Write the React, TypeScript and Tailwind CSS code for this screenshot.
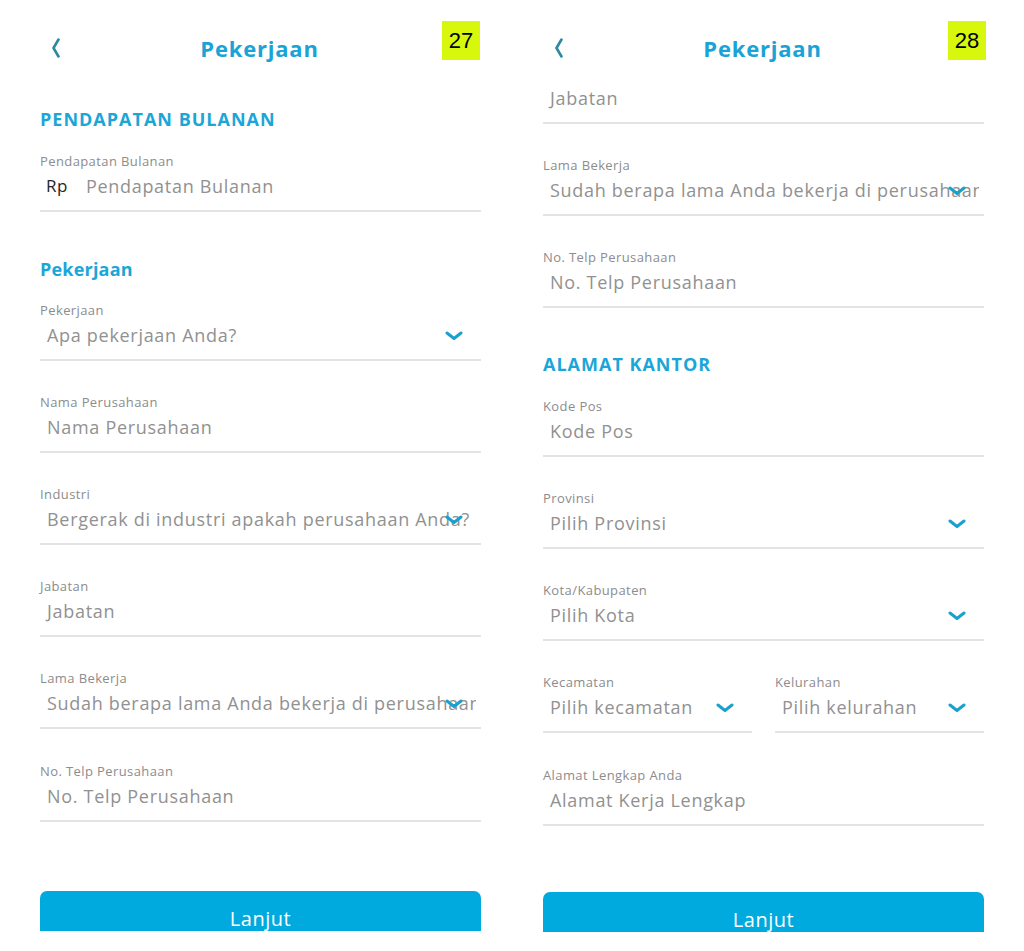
import React from "react";

const FONT = { fontFamily: '"Open Sans", "DejaVu Sans", sans-serif' };

function Chevron({ className = "" }: { className?: string }) {
  return (
    <svg width="18" height="10" viewBox="0 0 18 10" className={className}>
      <polyline points="2,2 9,7.5 16,2" fill="none" stroke="#1aa0cf" strokeWidth="3" strokeLinecap="round" strokeLinejoin="round" />
    </svg>
  );
}

function Header({ badge, badgeLeft }: { badge: string; badgeLeft: string }) {
  return (
    <div className="relative h-[84px] w-[503px] pt-[34px] bg-white">
      <div className="relative flex items-center justify-center h-[28px]">
        <svg width="10" height="20" viewBox="0 0 10 20" className="absolute left-[51px] top-[4px]">
          <polyline points="7.5,1.5 2.5,10 7.5,18.5" fill="none" stroke="#2b8b9d" strokeWidth="2.6" strokeLinecap="round" strokeLinejoin="round" />
        </svg>
        <span className="text-[22px] leading-[28px] font-bold tracking-[0.8px] text-[#1aa3d6] pl-[16px]">Pekerjaan</span>
      </div>
      <div
        className={`absolute top-[21px] ${badgeLeft} w-[38px] h-[39px] bg-[#d7f80c] flex items-center justify-center text-[22px] text-black`}
        style={{ fontFamily: '"Liberation Sans", Arial, sans-serif' }}
      >
        {badge}
      </div>
    </div>
  );
}

function Field({
  label,
  value,
  select = false,
  prefix,
  className = "",
  noLabel = false,
}: {
  label?: string;
  value: string;
  select?: boolean;
  prefix?: string;
  className?: string;
  noLabel?: boolean;
}) {
  return (
    <div className={className}>
      {!noLabel && (
        <div className="h-[16px] leading-[16px] text-[13px] tracking-[0.4px] text-[#8c8c8c] mb-[3px] whitespace-nowrap">{label}</div>
      )}
      <div className="relative h-[28px] flex items-center pr-[5px]">
        <div className="flex items-center overflow-hidden whitespace-nowrap pl-[7px] min-w-0 flex-1">
          {prefix && <span className="text-[17px] tracking-[0.5px] text-[#262626] mr-[18px] -ml-[1px]">{prefix}</span>}
          <span className="text-[18px] leading-[28px] tracking-[0.7px] text-[#919191]">{value}</span>
        </div>
        {select && <Chevron className="absolute right-[18px] top-[10px]" />}
      </div>
      <div className="mt-[10px] h-[2px] bg-[#e3e3e3]" />
    </div>
  );
}

function SectionTitle({ children, className = "" }: { children: React.ReactNode; className?: string }) {
  return <div className={`h-[24px] leading-[24px] text-[18px] font-bold text-[#1ba6d8] ${className}`}>{children}</div>;
}

function Button() {
  return (
    <div className="h-[40px] overflow-hidden rounded-t-[7px] bg-[#00aadf] flex justify-center">
      <span className="pt-[15px] text-[20px] leading-[26px] tracking-[0.5px] text-white">Lanjut</span>
    </div>
  );
}

export default function App() {
  return (
    <div className="w-[1024px] h-[951px] bg-white flex overflow-hidden" style={FONT}>
      {/* Left screen */}
      <div className="w-[503px] shrink-0">
        <Header badge="27" badgeLeft="left-[442px]" />
        <div className="pl-[40px] w-[481px]">
          <SectionTitle className="mt-[23px] tracking-[1px]">PENDAPATAN BULANAN</SectionTitle>
          <Field className="mt-[22px]" label="Pendapatan Bulanan" value="Pendapatan Bulanan" prefix="Rp" />
          <SectionTitle className="mt-[45px] tracking-[0.2px]">Pekerjaan</SectionTitle>
          <Field className="mt-[21px]" label="Pekerjaan" value="Apa pekerjaan Anda?" select />
          <Field className="mt-[33px]" label="Nama Perusahaan" value="Nama Perusahaan" />
          <Field className="mt-[33px]" label="Industri" value="Bergerak di industri apakah perusahaan Anda?" select />
          <Field className="mt-[33px]" label="Jabatan" value="Jabatan" />
          <Field className="mt-[33px]" label="Lama Bekerja" value="Sudah berapa lama Anda bekerja di perusahaan" select />
          <Field className="mt-[34px]" label="No. Telp Perusahaan" value="No. Telp Perusahaan" />
          <div className="mt-[69px]">
            <Button />
          </div>
        </div>
      </div>

      {/* Right screen */}
      <div className="w-[521px] shrink-0">
        <Header badge="28" badgeLeft="left-[445px]" />
        <div className="pl-[40px] w-[481px]">
          <Field noLabel value="Jabatan" />
          <Field className="mt-[33px]" label="Lama Bekerja" value="Sudah berapa lama Anda bekerja di perusahaan" select />
          <Field className="mt-[33px]" label="No. Telp Perusahaan" value="No. Telp Perusahaan" />
          <SectionTitle className="mt-[44px] tracking-[1px]">ALAMAT KANTOR</SectionTitle>
          <Field className="mt-[22px]" label="Kode Pos" value="Kode Pos" />
          <Field className="mt-[33px]" label="Provinsi" value="Pilih Provinsi" select />
          <Field className="mt-[33px]" label="Kota/Kabupaten" value="Pilih Kota" select />
          <div className="mt-[33px] grid grid-cols-2 gap-[23px]">
            <Field label="Kecamatan" value="Pilih kecamatan" select />
            <Field label="Kelurahan" value="Pilih kelurahan" select />
          </div>
          <Field className="mt-[34px]" label="Alamat Lengkap Anda" value="Alamat Kerja Lengkap" />
          <div className="mt-[66px]">
            <Button />
          </div>
        </div>
      </div>
    </div>
  );
}
